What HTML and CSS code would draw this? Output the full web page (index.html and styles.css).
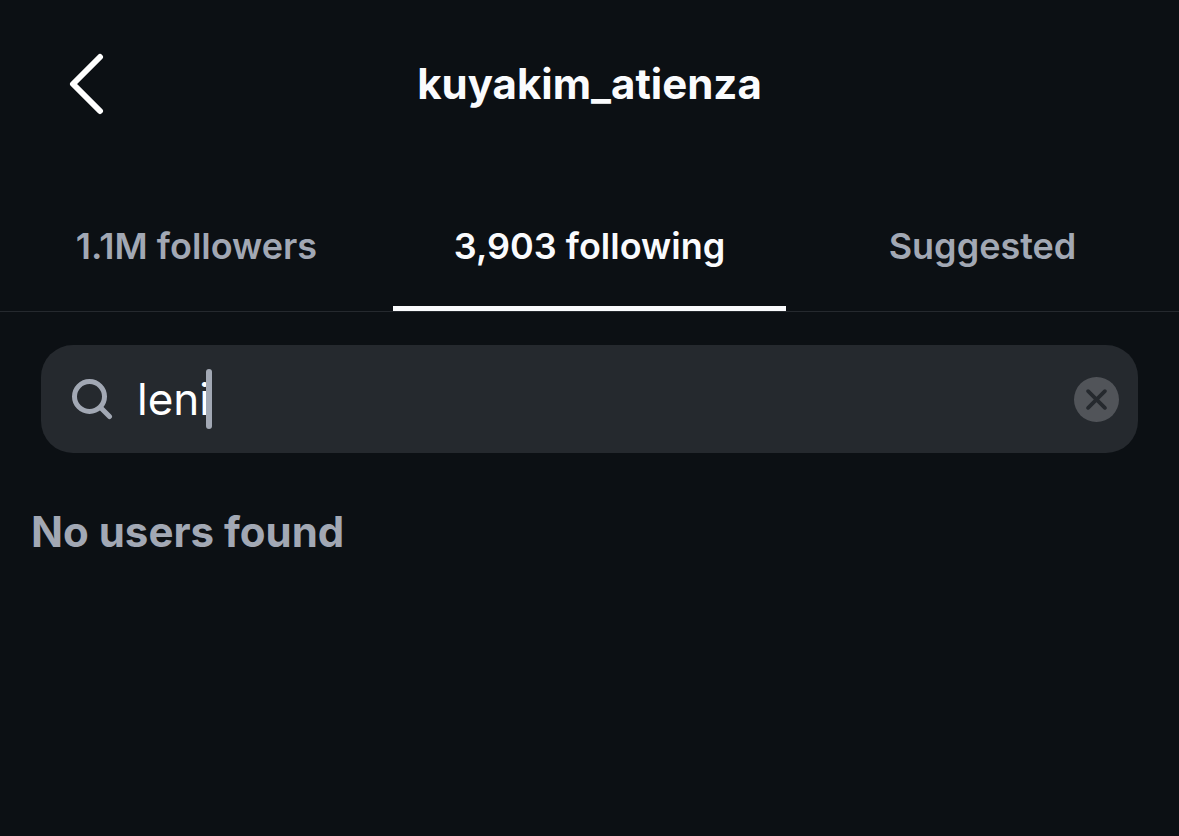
FILE: index.html
```html
<!DOCTYPE html>
<html lang="en">

<head>
  <meta charset="UTF-8">
  <meta name="viewport" content="width=device-width, initial-scale=1.0">
  <title>kuyakim_atienza</title>
  <link rel="stylesheet" href="styles.css">
</head>

<body>
  <header class="header">
    <button class="back-button" type="button" aria-label="Back">
      <svg width="36" height="62" viewBox="0 0 36 62" fill="none" stroke="currentColor" stroke-width="6" stroke-linecap="round" stroke-linejoin="round">
        <path d="M32 4 L5 31 L32 58" />
      </svg>
    </button>
    <h1 class="username">kuyakim_atienza</h1>
  </header>

  <nav class="tabs">
    <a class="tab" href="#followers">1.1M followers</a>
    <a class="tab active" href="#following" aria-current="page">3,903 following</a>
    <a class="tab" href="#suggested">Suggested</a>
  </nav>

  <main>
    <form class="search">
      <label class="search-icon" for="search" aria-label="Search">
        <svg width="42" height="42" viewBox="0 0 42 42" fill="none" stroke="currentColor" stroke-width="5" stroke-linecap="round">
          <circle cx="18.500" cy="18.500" r="15" />
          <path d="M29.500 29.500 L38.500 38.500" />
        </svg>
      </label>
      <div class="search-field">
        <input class="search-input" id="search" type="text" value="leni" autocomplete="off" spellcheck="false">
        <span class="caret"></span>
      </div>
      <button class="clear-button" type="reset" aria-label="Clear">
        <svg width="21" height="21" viewBox="0 0 20 20" fill="none" stroke="currentColor" stroke-width="3.500" stroke-linecap="round">
          <path d="M2 2 L18 18 M18 2 L2 18" />
        </svg>
      </button>
    </form>
    <p class="empty">No users found</p>
  </main>
</body>

</html>
```

FILE: styles.css
```css
* {
  box-sizing: border-box;
}

body {
  margin: 0;
  min-height: 100vh;
  background-color: #0c1014;
  color: #fafbfd;
  font-family: Inter, "Liberation Sans", sans-serif;
}

button {
  display: flex;
  align-items: center;
  justify-content: center;
  padding: 0;
  border: none;
  background: none;
  cursor: pointer;
}

.header {
  display: grid;
  grid-template-columns: 36px 1fr 36px;
  align-items: center;
  height: 168px;
  padding: 0 68px;
}

.back-button {
  color: #fff;
}

.username {
  margin: 0;
  font-size: 42px;
  line-height: 52px;
  font-weight: 700;
  text-align: center;
}

.tabs {
  display: grid;
  grid-template-columns: repeat(3, 1fr);
  height: 144px;
  border-bottom: 1px solid #25292e;
}

.tab {
  padding-top: 56px;
  border-bottom: 5px solid transparent;
  color: #a2a8b4;
  font-size: 36px;
  line-height: 44px;
  font-weight: 600;
  text-align: center;
  text-decoration: none;
}

.tab.active {
  border-bottom-color: #fafbfd;
  color: #fafbfd;
}

.search {
  display: flex;
  align-items: center;
  height: 108px;
  margin: 33px 41px 0;
  padding: 0 19px 0 30px;
  border-radius: 32px;
  background-color: #25292e;
}

.search-icon {
  display: flex;
  color: #a2a8b4;
}

.search-field {
  position: relative;
  flex: 1;
  margin: 0 24px;
}

.search-input {
  display: block;
  width: 100%;
  height: 60px;
  padding: 0;
  border: none;
  outline: none;
  background: none;
  color: #fff;
  font-family: inherit;
  font-size: 44px;
  caret-color: transparent;
}

/* sits right after the typed text */
.caret {
  position: absolute;
  top: 0;
  left: 69px;
  width: 6px;
  height: 60px;
  border-radius: 3px;
  background-color: #a2a8b4;
}

.clear-button {
  width: 45px;
  height: 45px;
  border-radius: 50%;
  background-color: #515459;
  color: #25292e;
}

.empty {
  margin: 53px 31px;
  color: #a2a8b4;
  font-size: 42px;
  line-height: 52px;
  font-weight: 700;
}
```
